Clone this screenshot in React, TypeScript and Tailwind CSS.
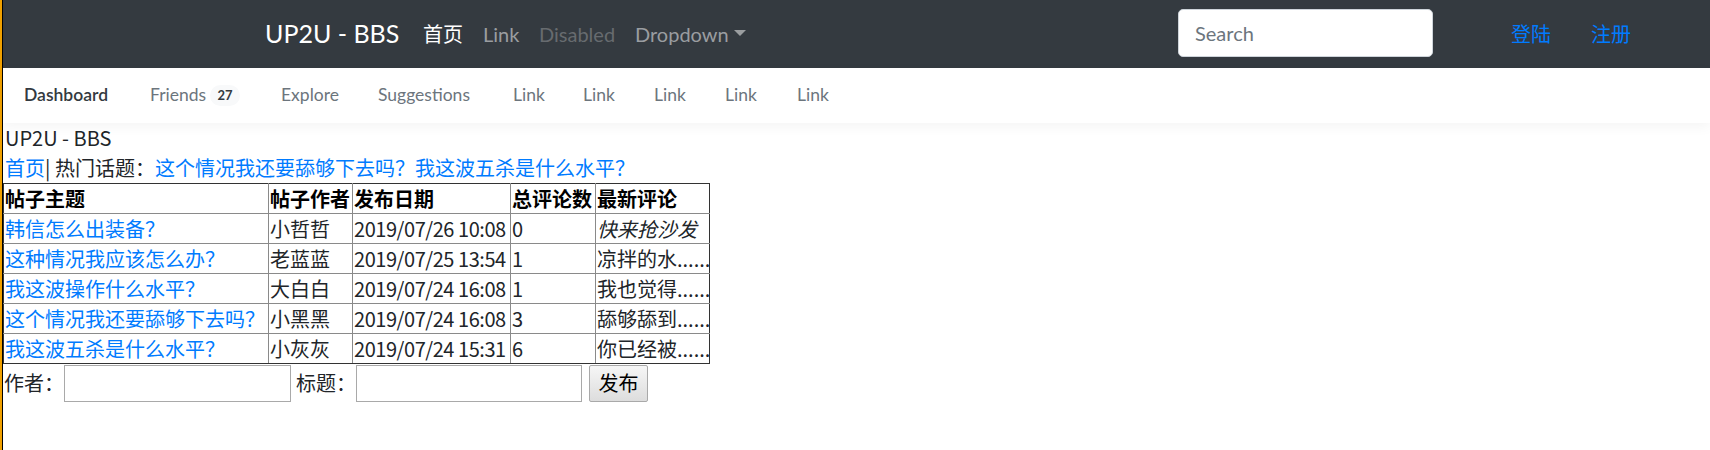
import React from "react";

const rows = [
  { t: "韩信怎么出装备？", a: "小哲哲", d: "2019/07/26 10:08", n: "0", c: "快来抢沙发", i: true },
  { t: "这种情况我应该怎么办？", a: "老蓝蓝", d: "2019/07/25 13:54", n: "1", c: "凉拌的水......", i: false },
  { t: "我这波操作什么水平？", a: "大白白", d: "2019/07/24 16:08", n: "1", c: "我也觉得......", i: false },
  { t: "这个情况我还要舔够下去吗？", a: "小黑黑", d: "2019/07/24 16:08", n: "3", c: "舔够舔到......", i: false },
  { t: "我这波五杀是什么水平？", a: "小灰灰", d: "2019/07/24 15:31", n: "6", c: "你已经被......", i: false },
];

function cls(...p: (string | false | undefined)[]) {
  return p.filter(Boolean).join(" ");
}

function Cell({
  children,
  head,
  col,
  row,
  last,
  className,
}: {
  children: React.ReactNode;
  head?: boolean;
  col: number;
  row: number;
  last: boolean;
  className?: string;
}) {
  const c = cls(
    "border border-[#8a8a8a] px-[1px] py-0 text-left align-middle leading-[29px] whitespace-nowrap overflow-hidden",
    col === 0 && "border-l-[#333333]",
    col === 4 && "border-r-[#333333]",
    row === 0 && "border-t-[#333333]",
    last && "border-b-[#333333]",
    head && "font-bold text-black",
    className
  );
  return head ? <th className={c}>{children}</th> : <td className={c}>{children}</td>;
}

export default function App() {
  return (
    <div className="min-h-[450px] w-[1710px] border-l-2 border-[#f0a000] bg-white">
      <div className="min-h-[450px] border-l border-black">
        {/* Top navbar */}
        <nav className="flex h-[68px] items-center bg-[#343a40] pl-[262px] pr-[79px] font-['Lato','Noto_Sans_CJK_SC',sans-serif]">
          <div className="flex items-center">
            <span className="w-[158px] text-[25px] text-white">UP2U - BBS</span>
            <span className="w-[60px] text-[20px] text-white">首页</span>
            <span className="w-[56px] text-[20px] text-[#9a9da0]">Link</span>
            <span className="w-[96px] text-[20px] text-[#676b6f]">Disabled</span>
            <span className="flex items-center text-[20px] text-[#9a9da0]">
              Dropdown
              <span className="ml-[5px] inline-block h-0 w-0 -translate-y-[1px] border-x-[6px] border-t-[6px] border-x-transparent border-t-[#9a9da0]" />
            </span>
          </div>
          <div className="ml-auto flex items-center">
            <input
              placeholder="Search"
              className="h-[48px] w-[255px] -translate-y-[1px] rounded-[5px] border border-[#ced4da] bg-white px-[16px] text-[20px] text-[#495057] outline-none placeholder:text-[#6c757d]"
            />
            <span className="ml-[78px] w-[40px] text-[20px] text-[#007bff]">登陆</span>
            <span className="ml-[40px] w-[40px] text-[20px] text-[#007bff]">注册</span>
          </div>
        </nav>

        {/* Sub nav */}
        <div className="relative z-10 flex h-[55px] items-center bg-white pl-[21px] font-['Lato','Noto_Sans_CJK_SC',sans-serif] text-[17.5px] text-[#6c757d] shadow-[0_4px_12px_rgba(0,0,0,0.045)]">
          <span className="w-[126px] font-semibold text-[#343a40]">Dashboard</span>
          <span className="flex w-[131px] items-center">
            <span className="inline-block w-[60px]">Friends</span>
            <span className="flex h-[21px] w-[30px] items-center justify-center rounded-full bg-[#f8f9fa] text-[13px] font-bold text-[#343a40]">
              27
            </span>
          </span>
          <span className="w-[97px]">Explore</span>
          <span className="w-[135px]">Suggestions</span>
          <span className="w-[70px]">Link</span>
          <span className="w-[71px]">Link</span>
          <span className="w-[71px]">Link</span>
          <span className="w-[72px]">Link</span>
          <span>Link</span>
        </div>

        {/* Content */}
        <div className="font-['Noto_Sans_CJK_SC',sans-serif] text-[20px] leading-[30px] text-[#212529]">
          <div className="pl-[2px]">UP2U - BBS</div>
          <div className="pl-[2px]">
            <a className="text-[#007bff]">首页</a>| 热门话题：
            <a className="text-[#007bff]">这个情况我还要舔够下去吗？</a>
            <a className="text-[#007bff]">我这波五杀是什么水平？</a>
          </div>
          <table className="w-[706px] table-fixed border-collapse">
            <thead>
              <tr>
                <Cell head col={0} row={0} last={false} className="w-[265px]">帖子主题</Cell>
                <Cell head col={1} row={0} last={false} className="w-[84px]">帖子作者</Cell>
                <Cell head col={2} row={0} last={false} className="w-[158px]">发布日期</Cell>
                <Cell head col={3} row={0} last={false} className="w-[85px]">总评论数</Cell>
                <Cell head col={4} row={0} last={false} className="w-[114px]">最新评论</Cell>
              </tr>
            </thead>
            <tbody>
              {rows.map((r, idx) => {
                const last = idx === rows.length - 1;
                const rr = idx + 1;
                return (
                  <tr key={idx}>
                    <Cell col={0} row={rr} last={last} className="text-[#007bff]">{r.t}</Cell>
                    <Cell col={1} row={rr} last={last}>{r.a}</Cell>
                    <Cell col={2} row={rr} last={last} className="tracking-[-0.45px]">{r.d}</Cell>
                    <Cell col={3} row={rr} last={last}>{r.n}</Cell>
                    <Cell col={4} row={rr} last={last} className={r.i ? "italic" : undefined}>{r.c}</Cell>
                  </tr>
                );
              })}
            </tbody>
          </table>
          <div className="flex h-[38px] items-center">
            <span className="w-[61px] pl-[1px]">作者：</span>
            <input className="h-[37px] w-[227px] border border-[#a9a9a9] bg-white outline-none" />
            <span className="ml-[5px] w-[60px]">标题：</span>
            <input className="h-[37px] w-[226px] border border-[#a9a9a9] bg-white outline-none" />
            <button className="ml-[7px] h-[37px] w-[59px] rounded-[2px] border border-[#a9a9a9] bg-gradient-to-b from-[#f6f6f6] to-[#dddddd] text-[20px] leading-none text-black">
              发布
            </button>
          </div>
        </div>
      </div>
    </div>
  );
}
